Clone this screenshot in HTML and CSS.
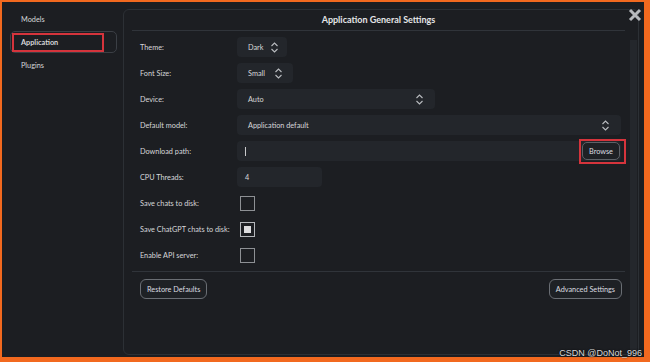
FILE: index.html
```html
<!DOCTYPE html>
<html lang="en">
<head>
  <meta charset="UTF-8">
  <title>Application General Settings</title>
  <link rel="stylesheet" href="styles.css">
</head>
<body>
  <div class="frame">
    <div class="sidebar">
      <div class="nav-item">Models</div>
      <div class="nav-item active"><span class="mark">Application</span></div>
      <div class="nav-item">Plugins</div>
    </div>

    <div class="panel">
      <div class="title">Application General Settings</div>

      <div class="rows">
        <div class="row">
          <label>Theme:</label>
          <div class="combo w-theme"><span>Dark</span><svg class="spin" viewBox="0 0 9 13"><path d="M1.5 5 L4.5 2 L7.5 5 M1.5 8 L4.5 11 L7.5 8"/></svg></div>
        </div>
        <div class="row">
          <label>Font Size:</label>
          <div class="combo w-font"><span>Small</span><svg class="spin" viewBox="0 0 9 13"><path d="M1.5 5 L4.5 2 L7.5 5 M1.5 8 L4.5 11 L7.5 8"/></svg></div>
        </div>
        <div class="row">
          <label>Device:</label>
          <div class="combo w-device"><span>Auto</span><svg class="spin" viewBox="0 0 9 13"><path d="M1.5 5 L4.5 2 L7.5 5 M1.5 8 L4.5 11 L7.5 8"/></svg></div>
        </div>
        <div class="row">
          <label>Default model:</label>
          <div class="combo w-model"><span>Application default</span><svg class="spin" viewBox="0 0 9 13"><path d="M1.5 5 L4.5 2 L7.5 5 M1.5 8 L4.5 11 L7.5 8"/></svg></div>
        </div>
        <div class="row">
          <label>Download path:</label>
          <div class="field w-path">
            <span class="caret"></span>
            <div class="browse">
              <button class="btn small">Browse</button>
              <span class="mark-box"></span>
            </div>
          </div>
        </div>
        <div class="row">
          <label>CPU Threads:</label>
          <div class="field w-cpu"><span>4</span></div>
        </div>
        <div class="row">
          <label>Save chats to disk:</label>
          <div class="check"></div>
        </div>
        <div class="row">
          <label>Save ChatGPT chats to disk:</label>
          <div class="check on"></div>
        </div>
        <div class="row">
          <label>Enable API server:</label>
          <div class="check"></div>
        </div>
      </div>

      <div class="footer">
        <button class="btn">Restore Defaults</button>
        <button class="btn">Advanced Settings</button>
      </div>

      <div class="scrollbar"></div>
    </div>

    <svg class="close" viewBox="0 0 14 14"><path d="M2 2 L12 12 M12 2 L2 12"/></svg>
    <div class="watermark">CSDN @DoNot_996</div>
  </div>
</body>
</html>
```

FILE: styles.css
```css
html, body {
  margin: 0;
  padding: 0;
  height: 100%;
}

body {
  font-family: Lato, "Open Sans", sans-serif;
  font-size: 7.3px;
  color: #d6d7d9;
  background: #1c1e22;
}

.frame {
  position: relative;
  display: flex;
  height: 362px;
  box-sizing: border-box;
  border-style: solid;
  border-color: #f2691f;
  border-width: 2px 6px 5px 2px;
  background: #1c1e22;
}

/* left navigation */
.sidebar {
  width: 107px;
  padding: 6px 0 0 8px;
  margin-right: 6px;
  flex-shrink: 0;
}

.nav-item {
  height: 22px;
  line-height: 22px;
  padding-left: 10px;
  margin-bottom: 1px;
  box-sizing: border-box;
  border: 1px solid transparent;
  border-radius: 5px;
}

.nav-item.active {
  border-color: #3b3f45;
  font-weight: bold;
  padding-left: 1px;
}

.nav-item .mark {
  display: block;
  width: 81px;
  height: 15px;
  line-height: 15px;
  padding-left: 7px;
  margin-top: 1px;
  border: 2px solid #d5343c;
}

/* main settings panel */
.panel {
  position: relative;
  flex: 1;
  margin: 7px 5px 2px 0;
  border: 1px solid #2c3035;
  border-radius: 6px;
  padding: 0 13px 0 8px;
}

.title {
  height: 20px;
  line-height: 20px;
  text-align: center;
  font-weight: bold;
  font-size: 9px;
  color: #e4e5e7;
  border-bottom: 1px solid #30343a;
}

.rows {
  padding: 6px 0 0 8px;
}

.row {
  display: flex;
  align-items: center;
  height: 20px;
  margin-bottom: 6px;
}

.row label {
  width: 97px;
  flex-shrink: 0;
  white-space: nowrap;
}

.combo, .field {
  display: flex;
  align-items: center;
  height: 20px;
  box-sizing: border-box;
  padding: 0 8px 0 11px;
  background: #23262b;
  border-radius: 4px;
}

.combo span {
  flex: 1;
}

.spin {
  width: 9px;
  height: 13px;
  fill: none;
  stroke: #b9bcc0;
  stroke-width: 1.1;
}

.w-theme { width: 50px; }
.w-font { width: 56px; padding-right: 10px; }
.w-device { width: 198px; padding-right: 11px; }
.w-model { width: 384px; padding-right: 11px; }
.w-path { width: 384px; padding: 0 1px 0 8px; justify-content: space-between; }
.w-cpu { width: 85px; padding-left: 8px; }

.caret {
  display: block;
  width: 1px;
  height: 9px;
  background: #c8c9cb;
}

.browse {
  position: relative;
}

.mark-box {
  position: absolute;
  left: -3px;
  right: -6px;
  top: -3px;
  bottom: -4px;
  border: 2px solid #d5343c;
}

.btn {
  font-family: inherit;
  font-size: 7.3px;
  color: #dcdde0;
  background: #1e2125;
  border: 1px solid #6a6e74;
  border-radius: 6px;
  height: 20px;
  padding: 0 6px;
  cursor: pointer;
}

.btn.small {
  display: block;
  width: 38px;
  height: 18px;
  padding: 0;
  border-radius: 5px;
  border-color: #5d6167;
}

.check {
  width: 15px;
  height: 15px;
  box-sizing: border-box;
  margin-left: 3px;
  border: 1px solid #8d9094;
}

.check.on {
  border-color: #b4b7bb;
  padding: 3px;
}

.check.on::after {
  content: "";
  display: block;
  width: 7px;
  height: 7px;
  background: #dcdcde;
}

.footer {
  display: flex;
  justify-content: space-between;
  margin-top: 2px;
  padding: 7px 3px 0 8px;
  border-top: 1px solid #30343a;
}

.scrollbar {
  position: absolute;
  right: 1px;
  top: 30px;
  bottom: 4px;
  width: 7px;
  background: #24272c;
}

.close {
  position: absolute;
  right: 2px;
  top: 6px;
  width: 14px;
  height: 14px;
  stroke: #b7babe;
  stroke-width: 3;
}

.watermark {
  position: absolute;
  right: 2px;
  bottom: -1px;
  font-family: "Liberation Sans", sans-serif;
  font-size: 9px;
  color: #d8d8d8;
  text-shadow: 0 0 2px #000;
}
```
